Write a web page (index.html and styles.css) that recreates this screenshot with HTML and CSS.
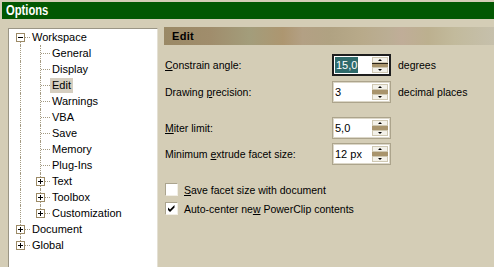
FILE: index.html
```html
<!DOCTYPE html>
<html lang="en">
<head>
    <meta charset="UTF-8">
    <title>Options</title>
    <link rel="stylesheet" href="styles.css">
</head>
<body>
<div class="window">
    <div class="titlebar"><span class="title-text">Options</span></div>

    <div class="main">
        <!-- left tree -->
        <div class="tree">
            <div class="row"><span class="cell start"><span class="box minus"></span></span><span class="label">Workspace</span></div>
            <div class="row"><span class="cell pipe"></span><span class="cell tee"></span><span class="label">General</span></div>
            <div class="row"><span class="cell pipe"></span><span class="cell tee"></span><span class="label">Display</span></div>
            <div class="row"><span class="cell pipe"></span><span class="cell tee"></span><span class="label selected">Edit</span></div>
            <div class="row"><span class="cell pipe"></span><span class="cell tee"></span><span class="label">Warnings</span></div>
            <div class="row"><span class="cell pipe"></span><span class="cell tee"></span><span class="label">VBA</span></div>
            <div class="row"><span class="cell pipe"></span><span class="cell tee"></span><span class="label">Save</span></div>
            <div class="row"><span class="cell pipe"></span><span class="cell tee"></span><span class="label">Memory</span></div>
            <div class="row"><span class="cell pipe"></span><span class="cell tee"></span><span class="label">Plug-Ins</span></div>
            <div class="row"><span class="cell pipe"></span><span class="cell tee"><span class="box plus"></span></span><span class="label">Text</span></div>
            <div class="row"><span class="cell pipe"></span><span class="cell tee"><span class="box plus"></span></span><span class="label">Toolbox</span></div>
            <div class="row"><span class="cell pipe"></span><span class="cell elbow"><span class="box plus"></span></span><span class="label">Customization</span></div>
            <div class="row"><span class="cell tee"><span class="box plus"></span></span><span class="label">Document</span></div>
            <div class="row"><span class="cell elbow"><span class="box plus"></span></span><span class="label">Global</span></div>
        </div>

        <!-- right page -->
        <div class="panel">
            <div class="panel-head">Edit</div>

            <div class="fields">
                <span class="field-label"><u>C</u>onstrain angle:</span>
                <div class="spin focused">
                    <span class="spin-value"><span class="sel">15,0</span></span>
                    <span class="spin-btns"><span class="up"></span><span class="mid"></span><span class="down"></span></span>
                </div>
                <span class="unit">degrees</span>

                <span class="field-label">Drawing <u>p</u>recision:</span>
                <div class="spin">
                    <span class="spin-value">3</span>
                    <span class="spin-btns"><span class="up"></span><span class="mid"></span><span class="down"></span></span>
                </div>
                <span class="unit">decimal places</span>
            </div>

            <div class="fields second">
                <span class="field-label"><u>M</u>iter limit:</span>
                <div class="spin">
                    <span class="spin-value">5,0</span>
                    <span class="spin-btns"><span class="up"></span><span class="mid"></span><span class="down"></span></span>
                </div>
                <span class="unit"></span>

                <span class="field-label">Minimum <u>e</u>xtrude facet size:</span>
                <div class="spin">
                    <span class="spin-value">12 px</span>
                    <span class="spin-btns"><span class="up"></span><span class="mid"></span><span class="down"></span></span>
                </div>
                <span class="unit"></span>
            </div>

            <div class="checks">
                <div class="check-row"><span class="checkbox"></span><span><u>S</u>ave facet size with document</span></div>
                <div class="check-row">
                    <span class="checkbox">
                        <svg width="11" height="11" viewBox="0 0 11 11"><path d="M2 4.5 L4 6.5 L8.5 2 L8.5 4.5 L4 9 L2 7 Z" fill="#000"/></svg>
                    </span>
                    <span>Auto-center ne<u>w</u> PowerClip contents</span>
                </div>
            </div>
        </div>
    </div>
</div>
</body>
</html>
```

FILE: styles.css
```css
body {
    margin: 0;
    font-family: "Liberation Sans", Arial, sans-serif;
    color: #000;
    background: #d4cdb6;
    overflow: hidden;
}

.window {
    height: 267px;
    padding: 2px 0 0 2px;
    box-sizing: border-box;
    display: flex;
    flex-direction: column;
    background: #d4cdb6;
}

/* --- title bar --- */
.titlebar {
    height: 17px;
    line-height: 17px;
    background: #025802;
    color: #fff;
    font-weight: bold;
    font-size: 14px;
    padding-left: 4px;
}

.title-text {
    display: inline-block;
    transform: scaleX(0.8);
    transform-origin: left center;
}

.main {
    flex: 1;
    display: flex;
    min-height: 0;
}

/* --- tree --- */
.tree {
    width: 150px;
    box-sizing: border-box;
    margin: 9px 0 0 6px;
    background: #fff;
    border: 1px solid #9a9585;
    border-right-color: #e4e0d4;
    border-bottom: none;
    font-size: 11px;
    overflow: hidden;
}

.row {
    display: flex;
    align-items: center;
    height: 16px;
}

.cell {
    position: relative;
    width: 20px;
    height: 16px;
    flex: none;
}

.cell::before,
.cell::after {
    content: "";
    position: absolute;
}

/* vertical dots */
.cell.pipe::before,
.cell.tee::before {
    left: 11px;
    top: 0;
    bottom: 0;
    border-left: 1px dotted #a39a82;
}

.cell.elbow::before {
    left: 11px;
    top: 0;
    height: 8px;
    border-left: 1px dotted #a39a82;
}

.cell.start::before {
    left: 11px;
    top: 8px;
    bottom: 0;
    border-left: 1px dotted #a39a82;
}

/* horizontal dots */
.cell.tee::after,
.cell.elbow::after,
.cell.start::after {
    left: 12px;
    right: -1px;
    top: 8px;
    border-top: 1px dotted #a39a82;
}

.box {
    position: absolute;
    left: 7px;
    top: 4px;
    width: 9px;
    height: 9px;
    box-sizing: border-box;
    border: 1px solid #9c8a66;
    background: #fff;
    z-index: 1;
}

.box::before {
    content: "";
    position: absolute;
    left: 1px;
    top: 3px;
    width: 5px;
    height: 1px;
    background: #000;
}

.box.plus::after {
    content: "";
    position: absolute;
    left: 3px;
    top: 1px;
    width: 1px;
    height: 5px;
    background: #000;
}

.label {
    margin-left: 1px;
    padding: 0 2px;
    height: 15px;
    line-height: 15px;
    white-space: nowrap;
}

.label.selected {
    background: #d5cec0;
}

/* --- right page --- */
.panel {
    flex: 1;
    margin: 8px 0 0 6px;
    font-size: 10.5px;
}

.panel-head {
    height: 18px;
    line-height: 18px;
    padding-left: 8px;
    font-weight: bold;
    font-size: 11px;
    letter-spacing: 0.3px;
    background: linear-gradient(90deg, #9a8966 0%, #a08d6c 14%, #a39d7b 26%, #ad9670 36%, #b3a084 42%, #b0a282 50%, #b8aa8a 60%, #bbae94 68%, #c0ad98 72%, #bcb08f 80%, #c2ba9c 88%, #c6c0ac 100%);
}

.fields {
    display: grid;
    grid-template-columns: 167px 59px auto;
    grid-auto-rows: 22px;
    row-gap: 5px;
    align-items: center;
    margin-top: 9px;
    padding-left: 1px;
}

.fields.second {
    margin-top: 14px;
    row-gap: 4px;
}

.unit {
    margin-left: 7px;
    white-space: nowrap;
}

.spin {
    height: 22px;
    box-sizing: border-box;
    display: flex;
    background: #fff;
    border: 1px solid #aca48c;
    box-shadow: inset 0 0 0 1px #dcd7c8;
}

.spin.focused {
    border: 2px solid #1e1e1e;
    box-shadow: none;
}

.spin-value {
    flex: 1;
    display: flex;
    align-items: center;
    padding-left: 2px;
    font-size: 11px;
}

.spin.focused .spin-value {
    padding-left: 1px;
}

.sel {
    background: #2f6b6b;
    color: #fff;
    padding: 2px 1px;
}

.spin-btns {
    width: 16px;
    margin: 2px 2px 2px 0;
    display: flex;
    flex-direction: column;
}

.spin.focused .spin-btns {
    margin: 1px 1px 1px 0;
}

.spin-btns .up,
.spin-btns .down {
    flex: 1;
    background: #f3f1e9;
    border: 1px solid #cfc8b2;
    display: flex;
    align-items: center;
    justify-content: center;
}

.spin-btns .mid {
    height: 4px;
    background: #a8946c;
}

.spin.focused .spin-btns .mid {
    border-top: 1px solid #2a2418;
    height: 3px;
}

.spin-btns .up::before {
    content: "";
    border-left: 2px solid transparent;
    border-right: 2px solid transparent;
    border-bottom: 2px solid #000;
}

.spin-btns .down::before {
    content: "";
    border-left: 2px solid transparent;
    border-right: 2px solid transparent;
    border-top: 2px solid #000;
}

/* --- check boxes --- */
.checks {
    margin-top: 15px;
    padding-left: 1px;
}

.check-row {
    height: 19px;
    display: flex;
    align-items: center;
    gap: 6px;
}

.checkbox {
    width: 13px;
    height: 13px;
    box-sizing: border-box;
    background: #fff;
    border: 1px solid;
    border-color: #aba48e #f2efe6 #f2efe6 #aba48e;
    display: flex;
    align-items: center;
    justify-content: center;
}
```
